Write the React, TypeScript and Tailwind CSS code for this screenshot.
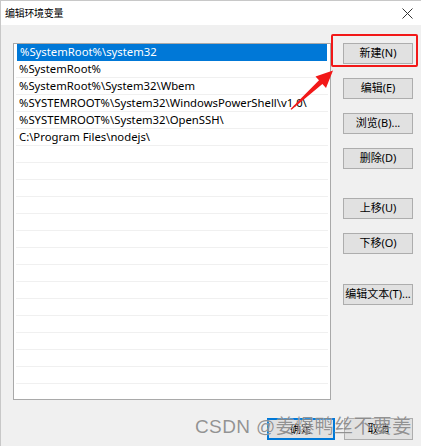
import React from 'react'

const paths = [
  '%SystemRoot%\\system32',
  '%SystemRoot%',
  '%SystemRoot%\\System32\\Wbem',
  '%SYSTEMROOT%\\System32\\WindowsPowerShell\\v1.0\\',
  '%SYSTEMROOT%\\System32\\OpenSSH\\',
  'C:\\Program Files\\nodejs\\',
]

const font = { fontFamily: '"Noto Sans", "Noto Sans CJK SC", sans-serif' }

function Btn({ label, className = '' }: { label: string; className?: string }) {
  return (
    <div
      className={`h-[21px] w-[70px] flex items-center justify-center bg-[#e1e1e1] border border-[#adadad] text-[11px] text-black ${className}`}
    >
      {label}
    </div>
  )
}

export default function App() {
  const rows = Array.from({ length: 21 }, (_, i) => paths[i] ?? '')

  return (
    <div className='relative w-[421px] h-[446px] overflow-hidden bg-[#f0f0f0] border-l border-t border-[#c8c8c8]' style={font}>
      {/* Title bar */}
      <div className='h-[24px] bg-white flex items-center justify-between pl-[4px] pr-[8px]'>
        <span className='text-[10px] text-black tracking-[-0.3px]'>编辑环境变量</span>
        <svg width='11' height='11' viewBox='0 0 11 11'>
          <path d='M0.5 0.5 L10.5 10.5 M10.5 0.5 L0.5 10.5' stroke='#333' strokeWidth='1' />
        </svg>
      </div>

      {/* Body */}
      <div className='flex pt-[18px] pl-[12px]'>
        <div className='w-[318px] h-[357px] bg-white border border-[#a9a9a9] px-[2px] overflow-hidden'>
          {rows.map((p, i) => (
            <div
              key={i}
              className={`h-[17px] flex items-center pl-[3px] text-[11.3px] border-b ${
                i === 0 ? 'bg-[#0078d7] text-white border-[#0078d7] mx-[1px]' : 'text-black border-[#f0f0f0]'
              }`}
            >
              {p}
            </div>
          ))}
        </div>

        <div className='ml-[12px] flex flex-col'>
          <Btn label='新建(N)' />
          <Btn label='编辑(E)' className='mt-[14px]' />
          <Btn label='浏览(B)...' className='mt-[14px]' />
          <Btn label='删除(D)' className='mt-[14px]' />
          <Btn label='上移(U)' className='mt-[29px]' />
          <Btn label='下移(O)' className='mt-[14px]' />
          <Btn label='编辑文本(T)...' className='mt-[30px]' />
        </div>
      </div>

      {/* Footer */}
      <div className='flex justify-end gap-[9px] pr-[8px] mt-[18px]'>
        <div className='h-[22px] w-[68px] flex items-center justify-center bg-[#e1e1e1] border-2 border-[#0078d7] text-[11px]'>确定</div>
        <div className='h-[22px] w-[69px] flex items-center justify-center bg-[#e1e1e1] border border-[#adadad] text-[11px]'>取消</div>
      </div>

      {/* Annotation: red box + arrow */}
      <div className='absolute left-[330px] top-[33px] w-[87px] h-[33px] border-2 border-[#f21818] rounded-[2px]' />
      <svg className='absolute left-0 top-0' width='421' height='446' viewBox='0 0 421 446'>
        <polygon points='289.5,108 318,79.3 314.5,75.5 332,69.5 325,87 321.4,83.1 290.5,108.8' fill='#f21818' />
      </svg>

      {/* Watermark */}
      <div
        className='absolute left-[194px] top-[413px] text-[19px] leading-[26px] tracking-[0.4px] text-[#8a8a8a] whitespace-nowrap opacity-90'
        style={{ fontFamily: '"Liberation Sans", "Noto Sans CJK SC", sans-serif', textShadow: '0 0 1px #fff' }}
      >
        CSDN @姜爆鸭丝不要姜
      </div>
    </div>
  )
}
